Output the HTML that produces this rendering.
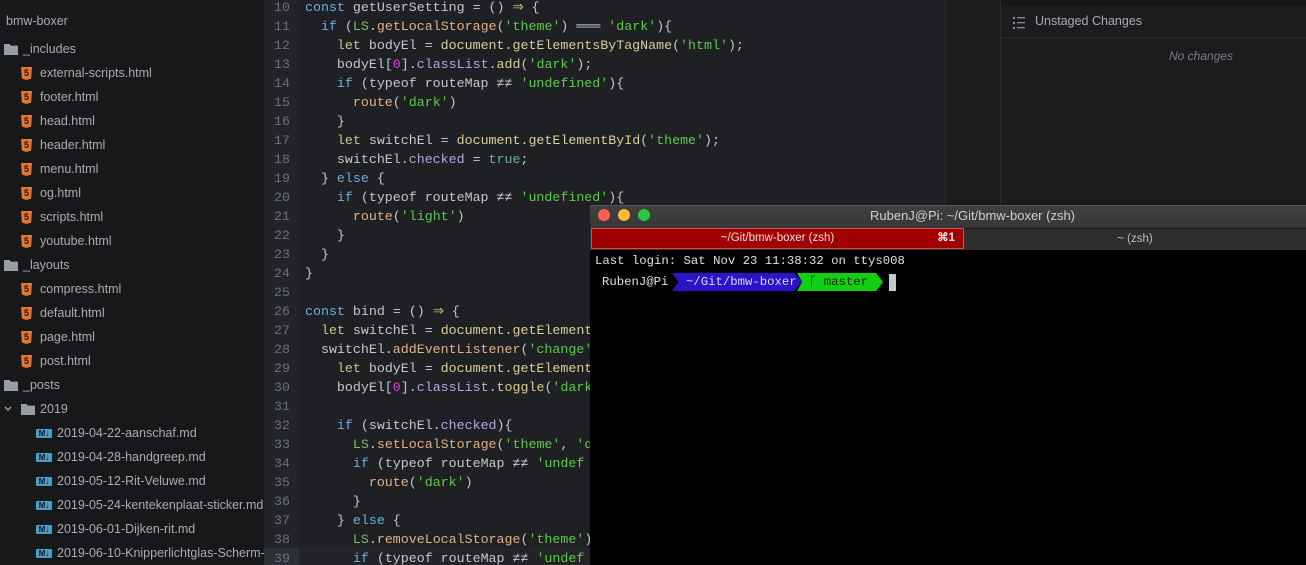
<!DOCTYPE html>
<html><head><meta charset="utf-8"><style>
body{margin:0;width:1306px;height:565px;overflow:hidden;background:#1e2023;position:relative;font-family:"Liberation Sans",sans-serif}
.abs{position:absolute}
#side{left:0;top:0;width:264px;height:565px;background:#17181a;overflow:hidden}
.it{position:absolute;font-size:12.5px;color:#a9acb1;white-space:nowrap;height:24px;line-height:24px;top:1px}
.h5{position:absolute;top:6px;width:11px;height:13px;background:#e37933;clip-path:polygon(0 0,100% 0,92% 88%,50% 100%,8% 88%);color:#17181a;font-size:9px;font-weight:bold;line-height:13px;text-align:center}
.fd{position:absolute;top:7px;width:14px;height:11px;background:#9a9da3;clip-path:polygon(0 0,40% 0,48% 15%,100% 15%,100% 100%,0 100%)}
.md{position:absolute;top:8px;width:16px;height:9px;background:#4b9fc0;color:#17181a;font-size:8px;font-weight:bold;line-height:9px;text-align:center;border-radius:1px}
#gut{left:264px;top:0;width:35px;height:565px;background:#222428}
#code{left:264px;top:0;width:681px;height:565px;font-family:"Liberation Mono",monospace;font-size:13.3px;color:#c5c8c6;overflow:hidden}
.ln{position:absolute;left:0;height:19px;line-height:19px;white-space:pre;margin-top:1px}
.n{position:absolute;left:2px;width:24px;text-align:right;color:#6b6f75}
.c{position:absolute;left:41px}
.k{color:#6ab0de}.l{color:#c9c78d}.s{color:#5fc94a}.m{color:#d9cf98}.p{color:#b7a7e0}.z{color:#e03ee0}.r{color:#e0b285}.t{color:#6ab49c}.o{color:#b0c070}.g{color:#7cbf5a}
#mini{left:945px;top:0;width:55px;height:565px;background:#1b1c1e;border-left:1px solid #2a2c2f}
#git{left:1000px;top:0;width:306px;height:565px;background:#1b1c1e;border-left:1px solid #2a2c2f}
#term{left:590px;top:205px;width:716px;height:360px;background:#000}
</style></head><body>
<div id="side" class="abs">
<div class="it" style="left:6px;top:9px;color:#a9acb1">bmw-boxer</div>
<div class="it" style="left:0;top:37px"><span class="fd" style="left:4px"></span><span style="position:absolute;left:23px">_includes</span></div>
<div class="it" style="left:0;top:61px"><span class="h5" style="left:21px">5</span><span style="position:absolute;left:40px">external-scripts.html</span></div>
<div class="it" style="left:0;top:85px"><span class="h5" style="left:21px">5</span><span style="position:absolute;left:40px">footer.html</span></div>
<div class="it" style="left:0;top:109px"><span class="h5" style="left:21px">5</span><span style="position:absolute;left:40px">head.html</span></div>
<div class="it" style="left:0;top:133px"><span class="h5" style="left:21px">5</span><span style="position:absolute;left:40px">header.html</span></div>
<div class="it" style="left:0;top:157px"><span class="h5" style="left:21px">5</span><span style="position:absolute;left:40px">menu.html</span></div>
<div class="it" style="left:0;top:181px"><span class="h5" style="left:21px">5</span><span style="position:absolute;left:40px">og.html</span></div>
<div class="it" style="left:0;top:205px"><span class="h5" style="left:21px">5</span><span style="position:absolute;left:40px">scripts.html</span></div>
<div class="it" style="left:0;top:229px"><span class="h5" style="left:21px">5</span><span style="position:absolute;left:40px">youtube.html</span></div>
<div class="it" style="left:0;top:253px"><span class="fd" style="left:4px"></span><span style="position:absolute;left:23px">_layouts</span></div>
<div class="it" style="left:0;top:277px"><span class="h5" style="left:21px">5</span><span style="position:absolute;left:40px">compress.html</span></div>
<div class="it" style="left:0;top:301px"><span class="h5" style="left:21px">5</span><span style="position:absolute;left:40px">default.html</span></div>
<div class="it" style="left:0;top:325px"><span class="h5" style="left:21px">5</span><span style="position:absolute;left:40px">page.html</span></div>
<div class="it" style="left:0;top:349px"><span class="h5" style="left:21px">5</span><span style="position:absolute;left:40px">post.html</span></div>
<div class="it" style="left:0;top:373px"><span class="fd" style="left:4px"></span><span style="position:absolute;left:23px">_posts</span></div>
<div class="it" style="left:0;top:397px"><svg style="position:absolute;left:4px;top:9px" width="8" height="6"><path d="M1 1 L4 4 L7 1" stroke="#9a9da3" stroke-width="1.5" fill="none"/></svg><span class="fd" style="left:21px"></span><span style="position:absolute;left:40px">2019</span></div>
<div class="it" style="left:0;top:421px"><span class="md" style="left:36px">M↓</span><span style="position:absolute;left:57px">2019-04-22-aanschaf.md</span></div>
<div class="it" style="left:0;top:445px"><span class="md" style="left:36px">M↓</span><span style="position:absolute;left:57px">2019-04-28-handgreep.md</span></div>
<div class="it" style="left:0;top:469px"><span class="md" style="left:36px">M↓</span><span style="position:absolute;left:57px">2019-05-12-Rit-Veluwe.md</span></div>
<div class="it" style="left:0;top:493px"><span class="md" style="left:36px">M↓</span><span style="position:absolute;left:57px">2019-05-24-kentekenplaat-sticker.md</span></div>
<div class="it" style="left:0;top:517px"><span class="md" style="left:36px">M↓</span><span style="position:absolute;left:57px">2019-06-01-Dijken-rit.md</span></div>
<div class="it" style="left:0;top:541px"><span class="md" style="left:36px">M↓</span><span style="position:absolute;left:57px">2019-06-10-Knipperlichtglas-Scherm-</span></div>
</div>
<div id="gut" class="abs"></div>
<div class="abs" style="left:264px;top:548px;width:35px;height:17px;background:#2c2f33"></div>
<div class="abs" style="left:299px;top:548px;width:291px;height:17px;background:#222427"></div>
<div id="code" class="abs">
<div class="ln" style="top:-3px"><span class="n">10</span><span class="c"><span class="k">const</span> getUserSetting = () <span class="o">⇒</span> {</span></div>
<div class="ln" style="top:16px"><span class="n">11</span><span class="c">  <span class="k">if</span> (<span class="g">LS</span>.<span class="r">getLocalStorage</span>(<span class="s">'theme'</span>) ═══ <span class="s">'dark'</span>){</span></div>
<div class="ln" style="top:35px"><span class="n">12</span><span class="c">    <span class="l">let</span> bodyEl = <span class="m">document.getElementsByTagName</span>(<span class="s">'html'</span>);</span></div>
<div class="ln" style="top:54px"><span class="n">13</span><span class="c">    bodyEl[<span class="z">0</span>].<span class="p">classList</span>.<span class="m">add</span>(<span class="s">'dark'</span>);</span></div>
<div class="ln" style="top:73px"><span class="n">14</span><span class="c">    <span class="k">if</span> (typeof routeMap ≠≠ <span class="s">'undefined'</span>){</span></div>
<div class="ln" style="top:92px"><span class="n">15</span><span class="c">      <span class="r">route</span>(<span class="s">'dark'</span>)</span></div>
<div class="ln" style="top:111px"><span class="n">16</span><span class="c">    }</span></div>
<div class="ln" style="top:130px"><span class="n">17</span><span class="c">    <span class="l">let</span> switchEl = <span class="m">document.getElementById</span>(<span class="s">'theme'</span>);</span></div>
<div class="ln" style="top:149px"><span class="n">18</span><span class="c">    switchEl.<span class="p">checked</span> = <span class="t">true</span>;</span></div>
<div class="ln" style="top:168px"><span class="n">19</span><span class="c">  } <span class="k">else</span> {</span></div>
<div class="ln" style="top:187px"><span class="n">20</span><span class="c">    <span class="k">if</span> (typeof routeMap ≠≠ <span class="s">'undefined'</span>){</span></div>
<div class="ln" style="top:206px"><span class="n">21</span><span class="c">      <span class="r">route</span>(<span class="s">'light'</span>)</span></div>
<div class="ln" style="top:225px"><span class="n">22</span><span class="c">    }</span></div>
<div class="ln" style="top:244px"><span class="n">23</span><span class="c">  }</span></div>
<div class="ln" style="top:263px"><span class="n">24</span><span class="c">}</span></div>
<div class="ln" style="top:282px"><span class="n">25</span></div>
<div class="ln" style="top:301px"><span class="n">26</span><span class="c"><span class="k">const</span> bind = () <span class="o">⇒</span> {</span></div>
<div class="ln" style="top:320px"><span class="n">27</span><span class="c">  <span class="l">let</span> switchEl = <span class="m">document.getElement</span></span></div>
<div class="ln" style="top:339px"><span class="n">28</span><span class="c">  switchEl.<span class="r">addEventListener</span>(<span class="s">'change'</span></span></div>
<div class="ln" style="top:358px"><span class="n">29</span><span class="c">    <span class="l">let</span> bodyEl = <span class="m">document.getElement</span></span></div>
<div class="ln" style="top:377px"><span class="n">30</span><span class="c">    bodyEl[<span class="z">0</span>].<span class="p">classList</span>.<span class="m">toggle</span>(<span class="s">'dark</span></span></div>
<div class="ln" style="top:396px"><span class="n">31</span></div>
<div class="ln" style="top:415px"><span class="n">32</span><span class="c">    <span class="k">if</span> (switchEl.<span class="p">checked</span>){</span></div>
<div class="ln" style="top:434px"><span class="n">33</span><span class="c">      <span class="g">LS</span>.<span class="r">setLocalStorage</span>(<span class="s">'theme'</span>, <span class="s">'d</span></span></div>
<div class="ln" style="top:453px"><span class="n">34</span><span class="c">      <span class="k">if</span> (typeof routeMap ≠≠ <span class="s">'undef</span></span></div>
<div class="ln" style="top:472px"><span class="n">35</span><span class="c">        <span class="r">route</span>(<span class="s">'dark'</span>)</span></div>
<div class="ln" style="top:491px"><span class="n">36</span><span class="c">      }</span></div>
<div class="ln" style="top:510px"><span class="n">37</span><span class="c">    } <span class="k">else</span> {</span></div>
<div class="ln" style="top:529px"><span class="n">38</span><span class="c">      <span class="g">LS</span>.<span class="r">removeLocalStorage</span>(<span class="s">'theme'</span>)</span></div>
<div class="ln" style="top:548px"><span class="n">39</span><span class="c">      <span class="k">if</span> (typeof routeMap ≠≠ <span class="s">'undef</span></span></div>
</div>
<div id="mini" class="abs"></div>
<div id="git" class="abs">
<div class="abs" style="left:0;top:0;width:306px;height:6px;background:#161719"></div>
<div class="abs" style="left:0;top:6px;width:306px;height:31px;border-bottom:1px solid #2a2c2f"></div>
<svg class="abs" style="left:11px;top:16px" width="14" height="14"><g fill="#8a8d92"><rect x="1" y="1" width="2" height="2"/><rect x="1" y="6" width="2" height="2"/><rect x="1" y="11" width="2" height="2"/><rect x="5" y="1" width="8" height="1.3"/><rect x="5" y="6" width="8" height="1.3"/><rect x="5" y="11" width="8" height="1.3"/></g></svg>
<div class="abs" style="left:34px;top:14px;color:#a9acb1;font-size:12.5px">Unstaged Changes</div>
<div class="abs" style="left:168px;top:49px;color:#7a7d82;font-size:12px;font-style:italic">No changes</div>
</div>
<div id="term" class="abs">
<div class="abs" style="left:0;top:0;width:716px;height:23px;background:linear-gradient(#404040,#363636);border-top:1px solid #555"></div>
<div class="abs" style="left:8px;top:4px;width:12px;height:12px;border-radius:50%;background:#fe5f57"></div>
<div class="abs" style="left:28px;top:4px;width:12px;height:12px;border-radius:50%;background:#febc2e"></div>
<div class="abs" style="left:48px;top:4px;width:12px;height:12px;border-radius:50%;background:#28c840"></div>
<div class="abs" style="left:280px;top:3px;color:#cfcfcf;font-size:13px">RubenJ@Pi: ~/Git/bmw-boxer (zsh)</div>
<div class="abs" style="left:0;top:23px;width:716px;height:21px;background:#2e2e2e;border-top:1px solid #1a1a1a"></div>
<div class="abs" style="left:1px;top:23px;width:371px;height:19px;background:#a00000;border:1px solid #d05050;color:#f0e0e0;font-size:11.5px;line-height:19px;text-align:center">~/Git/bmw-boxer (zsh)<span style="position:absolute;right:8px;font-weight:bold">⌘1</span></div>
<div class="abs" style="left:374px;top:24px;width:342px;height:20px;color:#bbb;font-size:11.5px;line-height:20px;text-align:center">~ (zsh)</div>
<div class="abs" style="left:5px;top:49px;color:#e0e0e0;font-family:'Liberation Mono',monospace;font-size:12.3px;white-space:pre">Last login: Sat Nov 23 11:38:32 on ttys008</div>
<div class="abs" style="left:12px;top:70px;color:#e0e0e0;font-family:'Liberation Mono',monospace;font-size:12.3px;line-height:14px">RubenJ@Pi</div>
<div class="abs" style="left:82px;top:68px;width:130px;height:18px;background:#2a14c8;clip-path:polygon(0 0,94% 0,100% 50%,94% 100%,0 100%,5% 50%);color:#d8d8ff;font-family:'Liberation Mono',monospace;font-size:12.3px;line-height:18px;padding-left:14px;box-sizing:border-box">~/Git/bmw-boxer</div>
<div class="abs" style="left:207px;top:68px;width:86px;height:18px;background:#10d010;clip-path:polygon(0 0,92% 0,100% 50%,92% 100%,0 100%,6% 50%);color:#102010;font-family:'Liberation Mono',monospace;font-size:12.3px;line-height:18px;padding-left:12px;box-sizing:border-box">ᚴ master</div>
<div class="abs" style="left:299px;top:69px;width:7px;height:17px;background:#c8c8c8"></div>
</div>
</body></html>
